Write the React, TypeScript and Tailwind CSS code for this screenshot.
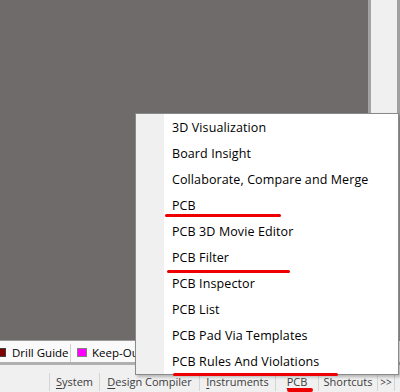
import React from "react";

const items = [
  "3D Visualization",
  "Board Insight",
  "Collaborate, Compare and Merge",
  "PCB",
  "PCB 3D Movie Editor",
  "PCB Filter",
  "PCB Inspector",
  "PCB List",
  "PCB Pad Via Templates",
  "PCB Rules And Violations",
];

function Tab({ w, first, rest }: { w: string; first: string; rest: string }) {
  return (
    <div className={`${w} h-[18px] flex items-center justify-center border-r border-[#d4d4d4] text-[#3c3c3c] whitespace-nowrap`}>
      <span className="underline underline-offset-2">{first}</span>
      <span>{rest}</span>
    </div>
  );
}

export default function App() {
  return (
    <div
      className="relative w-[400px] h-[392px] overflow-hidden bg-[#f0f0f0] text-[12.5px]"
      style={{ fontFamily: '"Open Sans", "Noto Sans", sans-serif' }}
    >
      <div className="flex h-[340px]">
        <div className="w-[368px] bg-[#6f6b6a]" />
        <div className="w-[3px] bg-[#a3a3a3]" />
        <div className="w-[26px] bg-[#f0f0f0]" />
        <div className="w-[3px] bg-[#a0a0a0]" />
      </div>
      <div className="h-[22px] bg-[#fafafa] border-t border-[#9a9a9a] flex items-center pt-[2px] text-[11.5px] whitespace-nowrap">
        <div className="flex items-center h-[18px] w-[71px] shrink-0 border-r border-[#d0d0d0]">
          <div className="w-[6px] h-[9px] shrink-0 bg-[#800000] border border-[#404040] border-l-0" />
          <span className="ml-[6px] text-black">Drill Guide</span>
        </div>
        <div className="flex items-center h-full ml-[6px] shrink-0">
          <div className="w-[10px] h-[9px] shrink-0 bg-[#ff00ff] border border-[#808080]" />
          <span className="ml-[5px] text-black">Keep-Out Layer</span>
        </div>
      </div>
      <div className="h-[3px] bg-[#b0b0b0]" />
      <div className="flex pt-[8px] pl-[49px] text-[11px]">
        <div className="flex border-l border-[#d4d4d4] bg-[#f0f0f0]">
          <Tab w="w-[50px]" first="S" rest="ystem" />
          <Tab w="w-[100px]" first="D" rest="esign Compiler" />
          <Tab w="w-[76px]" first="I" rest="nstruments" />
          <Tab w="w-[43px]" first="P" rest="CB" />
          <Tab w="w-[59px]" first="" rest="Shortcuts" />
          <div className="w-[17px] h-[18px] flex items-center justify-center border-r border-[#d4d4d4] text-[#3c3c3c] text-[10px]">
            &gt;&gt;
          </div>
        </div>
      </div>
      <div className="absolute left-[287px] top-[388px] w-[26px] h-[4px] bg-[#ee0000] rounded-full" />

      <div className="absolute left-[135px] top-[113px] w-[264px] h-[262px] bg-white border border-[#8a8a8a] flex shadow-[2px_2px_3px_rgba(0,0,0,0.25)]">
        <div className="w-[28px] bg-[#f0f0f0]" />
        <div className="flex-1 pt-[1px]">
          {items.map((t) => (
            <div key={t} className="h-[26px] flex items-center pl-[8px] text-black whitespace-nowrap tracking-[0.1px]">
              {t}
            </div>
          ))}
        </div>
      </div>
      <div className="absolute left-[165px] top-[214px] w-[116px] h-[3px] bg-[#ee0000] rounded-full" />
      <div className="absolute left-[167px] top-[270px] w-[123px] h-[3px] bg-[#ee0000] rounded-full" />
      <div className="absolute left-[173px] top-[373px] w-[165px] h-[3px] bg-[#ee0000] rounded-full" />
    </div>
  );
}
